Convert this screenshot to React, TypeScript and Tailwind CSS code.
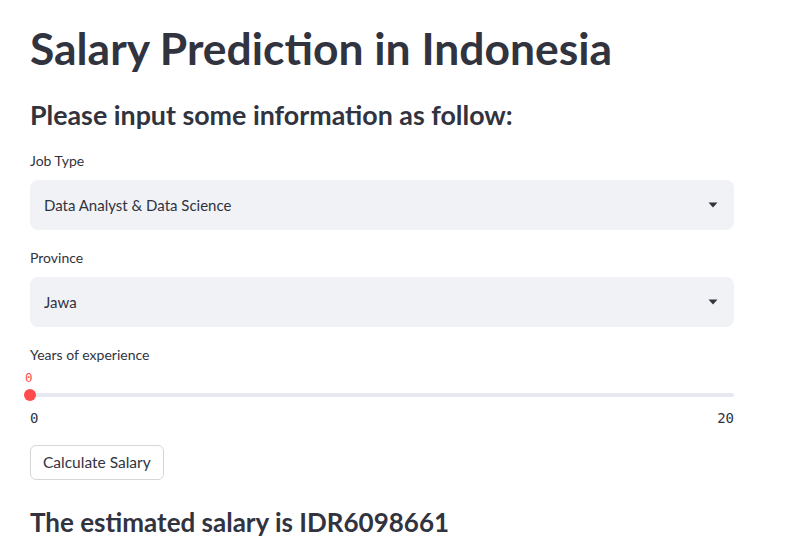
import React from 'react';

const font = { fontFamily: 'Lato, "Noto Sans", sans-serif' };
const mono = { fontFamily: '"DejaVu Sans Mono", monospace' };

const Select: React.FC<{ label: string; value: string }> = ({ label, value }) => (
  <div className="flex flex-col gap-[8px] mb-[17px]">
    <div className="text-[14px] h-[22px] leading-[22px]">{label}</div>
    <div className="h-[50px] rounded-[8px] bg-[#f0f2f6] flex items-center justify-between pl-[14px] pr-[16px]">
      <span className="text-[15px]">{value}</span>
      <svg width="10" height="6" viewBox="0 0 10 6">
        <path d="M0.5 0.5 L9.5 0.5 L5 5.5 Z" fill="#31333f" />
      </svg>
    </div>
  </div>
);

const Slider: React.FC<{ label: string; value: number; min: number; max: number }> = ({ label, value, min, max }) => (
  <div className="flex flex-col">
    <div className="text-[14px] h-[22px] leading-[22px]">{label}</div>
    <div className="mt-[4px] h-[16px] leading-[16px] text-[12.5px] text-[#ff4b4b] -ml-[5px]" style={mono}>{value}</div>
    <div className="relative h-[12px] mt-[3px] flex items-center">
      <div className="w-full h-[4px] rounded bg-[#e6e9ef]" />
      <div className="absolute -left-[6px] w-[12px] h-[12px] rounded-full bg-[#ff4b4b]" />
    </div>
    <div className="mt-[7px] h-[20px] leading-[20px] flex justify-between text-[14px]" style={mono}>
      <span>{min}</span>
      <span>{max}</span>
    </div>
  </div>
);

export default function App() {
  return (
    <div className="bg-white min-h-[549px] w-[785px] overflow-hidden" style={font}>
      <div className="w-[704px] ml-[30px] pt-[22px] text-[#31333f] flex flex-col items-stretch">
        <h1 className="text-[44.4px] font-bold leading-[52px] h-[52px]">Salary Prediction in Indonesia</h1>
        <h3 className="text-[26.8px] font-bold leading-[36px] mt-[23px] mb-[17px]">Please input some information as follow:</h3>
        <Select label="Job Type" value="Data Analyst & Data Science" />
        <Select label="Province" value="Jawa" />
        <Slider label="Years of experience" value={0} min={0} max={20} />
        <div className="mt-[17px]">
          <button className="h-[35px] px-[12px] border border-[#d6d6d9] rounded-[6px] text-[15.5px] bg-white">Calculate Salary</button>
        </div>
        <h3 className="text-[26px] font-bold leading-[36px] mt-[24px]">The estimated salary is IDR6098661</h3>
      </div>
    </div>
  );
}
